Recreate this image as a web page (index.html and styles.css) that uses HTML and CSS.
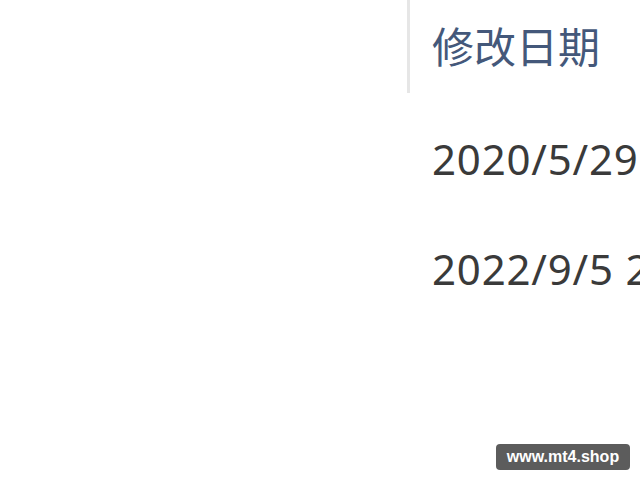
FILE: index.html
```html
<!DOCTYPE html>
<html lang="zh-CN">
<head>
<meta charset="utf-8">
<link rel="stylesheet" href="styles.css">
</head>
<body>
<div class="view">
  <div class="blank"></div>
  <div class="column">
    <div class="header">修改日期</div>
    <div class="rows">
      <div class="row">2020/5/29 10:12</div>
      <div class="row">2022/9/5 21:40</div>
    </div>
  </div>
</div>
<div class="badge">www.mt4.shop</div>
</body>
</html>
```
FILE: styles.css
```css
html, body {
  margin: 0;
  padding: 0;
  background: #ffffff;
  width: 640px;
  height: 480px;
  overflow: hidden;
}
.view {
  display: flex;
  width: 640px;
  height: 480px;
  overflow: hidden;
}
.blank {
  width: 407px;
  flex: none;
}
.column {
  flex: 1;
  min-width: 0;
  white-space: nowrap;
  overflow: hidden;
}
.header {
  height: 93px;
  border-left: 3px solid #e6e6e6;
  padding-left: 22px;
  font-family: "Noto Sans CJK SC", "Noto Sans", sans-serif;
  font-size: 42px;
  line-height: 90px;
  color: #44587a;
  box-sizing: border-box;
}
.rows {
  padding-top: 11px;
  padding-left: 25px;
}
.row {
  font-family: "Noto Sans", "Noto Sans CJK SC", sans-serif;
  font-size: 42px;
  letter-spacing: 0.8px;
  line-height: 110px;
  height: 110px;
  color: #3a3a3a;
}
.badge {
  position: absolute;
  left: 496px;
  top: 444px;
  width: 134px;
  height: 26px;
  box-sizing: border-box;
  background: #5c5c5c;
  border-radius: 4px;
  color: #ffffff;
  font-family: "Liberation Sans", Arial, sans-serif;
  font-weight: bold;
  font-size: 16px;
  line-height: 26px;
  text-align: center;
}
```
